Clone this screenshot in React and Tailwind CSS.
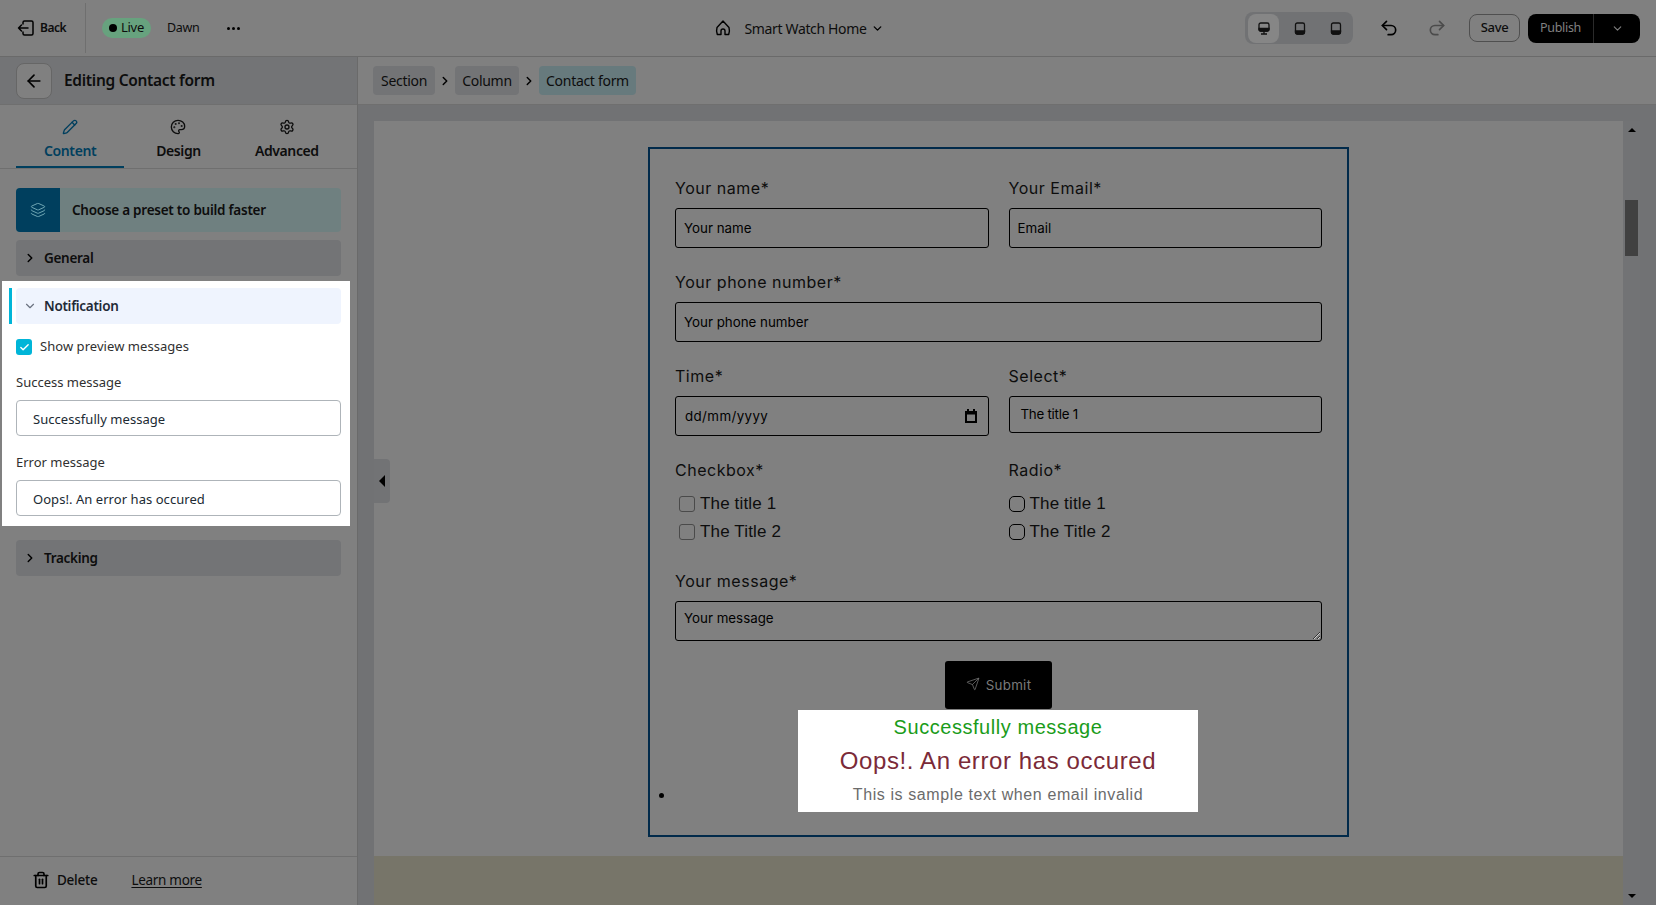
import {
  ArrowLeft,
  Check,
  ChevronDown,
  ChevronRight,
  Layers,
  Palette,
  Pencil,
  Redo2,
  Send,
  Settings,
  Trash2,
  Undo2,
} from "lucide-react";

const ui = "font-['Noto_Sans',sans-serif]";
const preview = "font-['Inter',sans-serif]";

const BackIcon = () => (
  <svg width="18" height="18" viewBox="0 0 18 18" fill="none" stroke="#000" strokeWidth="1.5" strokeLinecap="round" strokeLinejoin="round">
    <path d="M6 5V3.500A1.500 1.500 0 0 1 7.500 2h7A1.500 1.500 0 0 1 16 3.500v11a1.500 1.500 0 0 1-1.500 1.500h-7A1.500 1.500 0 0 1 6 14.500V13" />
    <path d="M11 9H1.500M4.500 6l-3 3 3 3" />
  </svg>
);

const HomeIcon = () => (
  <svg width="16" height="18" viewBox="0 0 16 18" fill="none" stroke="#000" strokeWidth="1.4" strokeLinejoin="round">
    <path d="M8 2 2 8.500c-.6 2-.5 4.500.3 7H6v-3.500a2 2 0 0 1 4 0v3.500h3.700c.8-2.500.9-5 .3-7z" />
  </svg>
);

const DeviceIcon = ({ kind }) => (
  <svg width="12" height="13" viewBox="0 0 12 13" fill="none" stroke="#111" strokeWidth="1.3">
    {kind === "desktop" ? (
      <>
        <rect x="1" y="1" width="10" height="8" rx="1.800" />
        <path d="M1 6.500h10V7.500a1.500 1.500 0 0 1-1.500 1.500h-7A1.500 1.500 0 0 1 1 7.500z" fill="#111" />
        <path d="M3 12h6M6 9v3" />
      </>
    ) : (
      <>
        <rect x="1.500" y="1" width="9" height="11" rx="1.800" />
        <path d="M1.500 9h9v1.200a1.800 1.800 0 0 1-1.800 1.800H3.300a1.800 1.800 0 0 1-1.800-1.800z" fill="#111" />
      </>
    )}
  </svg>
);

const SectionRow = ({ label }) => (
  <div className="flex h-9 items-center rounded bg-[#737476] pl-[7px]">
    <ChevronRight size={14} strokeWidth={2.5} className="text-black" />
    <span className="ml-[7px] text-[13.500px] font-semibold tracking-[-0.3px] text-[#0d0d0d]">{label}</span>
  </div>
);

const TabItem = ({ icon: Icon, label, active }) => (
  <div className={`flex h-[63px] flex-col items-center pt-[14px] ${active ? "border-b-2 border-[#003f5e] text-[#003f5e]" : "text-[#0d0d0d]"}`}>
    <Icon size={16} strokeWidth={2} />
    <span className="mt-[5px] text-[14px] font-semibold tracking-[-0.4px]">{label}</span>
  </div>
);

const NotifyField = ({ label, value }) => (
  <div>
    <div className="text-[13px] leading-[18px] text-[#303030]">{label}</div>
    <input
      readOnly
      value={value}
      className="mt-[9px] h-9 w-full rounded border border-[#aeb4b9] bg-white px-4 pt-[2px] text-[13px] tracking-[0.05px] text-[#202a33] outline-none"
    />
  </div>
);

const Sidebar = () => (
  <aside className="flex w-[358px] shrink-0 flex-col border-r border-[#6a6a6a] bg-[#808080]">
    <div className="flex h-[48px] items-center border-b border-[#6f6f6f] bg-[#737476] pl-4">
      <button className="flex h-9 w-9 items-center justify-center rounded-lg border border-[#666] bg-[#808080]">
        <ArrowLeft size={20} className="text-black" />
      </button>
      <h1 className="ml-3 pt-px text-[15.500px] font-semibold tracking-[-0.3px] text-[#0d0d0d]">Editing Contact form</h1>
    </div>
    <div className="grid h-[64px] grid-cols-3 border-b border-[#6f6f6f] px-4">
      <TabItem icon={Pencil} label="Content" active />
      <TabItem icon={Palette} label="Design" />
      <TabItem icon={Settings} label="Advanced" />
    </div>
    <div className="flex flex-1 flex-col px-4 pt-[19px]">
      <div className="flex h-11 items-center overflow-hidden rounded bg-[#6f8080]">
        <div className="flex h-full w-11 items-center justify-center bg-[#003f5e]">
          <Layers size={16} strokeWidth={1.5} className="text-[#6fa7b4]" />
        </div>
        <span className="ml-3 text-[13.500px] font-semibold tracking-[-0.25px] text-[#0d0d0d]">Choose a preset to build faster</span>
      </div>
      <div className="mt-2">
        <SectionRow label="General" />
      </div>
      {/* highlighted block, bleeds past the panel padding */}
      <div className="relative -ml-[14px] -mr-[9px] mt-[5px] h-[245px] bg-white pl-[14px] pr-[9px] pt-[7px]">
        <div className="absolute left-[7px] top-[7px] h-9 w-[3px] bg-[#00b5d8]" />
        <div className="flex h-9 items-center rounded bg-[#eff4fe] pl-[7px]">
          <ChevronDown size={14} className="text-[#6b7280]" />
          <span className="ml-[7px] text-[13.500px] font-semibold tracking-[-0.3px] text-[#1f2a37]">Notification</span>
        </div>
        <div className="mt-[15px] flex h-4 items-center">
          <span className="flex h-4 w-4 items-center justify-center rounded-[3px] bg-[#00b5d8]">
            <Check size={11} strokeWidth={3} className="text-white" />
          </span>
          <span className="ml-2 text-[13px] tracking-[0.05px] text-[#303030]">Show preview messages</span>
        </div>
        <div className="mt-[18px]">
          <NotifyField label="Success message" value="Successfully message" />
        </div>
        <div className="mt-[17px]">
          <NotifyField label="Error message" value="Oops!. An error has occured" />
        </div>
      </div>
      <div className="mt-[14px]">
        <SectionRow label="Tracking" />
      </div>
    </div>
    <div className="flex h-[49px] items-center border-t border-[#6f6f6f] pb-[2px] pl-8">
      <Trash2 size={18} strokeWidth={2.25} className="text-black" />
      <span className="ml-[7px] text-[13.500px] font-medium tracking-[-0.25px] text-[#0d0d0d]">Delete</span>
      <a className="ml-[34px] text-[13.500px] tracking-[-0.3px] text-[#0d0d0d] underline underline-offset-2">Learn more</a>
    </div>
  </aside>
);

const FieldLabel = ({ children }) => (
  <div className="text-[16px] leading-[20px] tracking-[0.52px] text-[#0d0d0d]">{children}</div>
);

const fieldBox = "mt-[10px] h-10 w-full rounded-[3px] border border-black bg-transparent px-2 text-[13.330px] text-black outline-none placeholder:text-black";

const TextField = ({ label, placeholder }) => (
  <div>
    <FieldLabel>{label}</FieldLabel>
    <input readOnly placeholder={placeholder} className={fieldBox} />
  </div>
);

const Choice = ({ label, round }) => (
  <label className="flex h-7 items-center font-['Liberation_Sans',sans-serif] text-[17px] tracking-[0.15px] text-[#0d0d0d]">
    {round ? (
      <span className="h-4 w-4 rounded-[5px] border border-black" />
    ) : (
      <span className="ml-1 h-4 w-4 rounded-[3px] border border-[#4a4a4a]" />
    )}
    <span className="ml-[5px]">{label}</span>
  </label>
);

const ContactForm = () => (
  <form className={`relative mx-auto h-[690px] w-[701px] border-2 border-[#012a4a] px-[25px] pt-[29px] ${preview}`}>
    <div className="grid grid-cols-2 gap-x-5">
      <TextField label="Your name*" placeholder="Your name" />
      <TextField label="Your Email*" placeholder="Email" />
    </div>
    <div className="mt-[24px]">
      <TextField label="Your phone number*" placeholder="Your phone number" />
    </div>
    <div className="mt-[24px] grid grid-cols-2 gap-x-5">
      <div>
        <FieldLabel>Time*</FieldLabel>
        <div className="mt-[10px] flex h-10 items-center justify-between rounded-[3px] border border-black pl-[9px] pr-[11px] text-[13.330px] tracking-[0.4px] text-black">
          <span className="pt-px">dd/mm/yyyy</span>
          <svg width="12" height="14" viewBox="0 0 12 14" fill="none" stroke="#000" strokeWidth="2">
            <path d="M1 3h10v10H1zM1 4.500h10M3 0v3M9 0v3" />
          </svg>
        </div>
      </div>
      <div>
        <FieldLabel>Select*</FieldLabel>
        <div className="mt-[10px] flex h-[37px] items-center rounded-[3px] border border-black pl-[11px] text-[13.330px] tracking-[-0.25px] text-black">The title 1</div>
      </div>
    </div>
    <div className="mt-[24px] grid grid-cols-2 gap-x-5">
      <div>
        <FieldLabel>Checkbox*</FieldLabel>
        <div className="mt-[10px]">
          <Choice label="The title 1" />
          <Choice label="The Title 2" />
        </div>
      </div>
      <div>
        <FieldLabel>Radio*</FieldLabel>
        <div className="mt-[10px]">
          <Choice label="The title 1" round />
          <Choice label="The Title 2" round />
        </div>
      </div>
    </div>
    <div className="mt-[25px]">
      <FieldLabel>Your message*</FieldLabel>
      <textarea
        readOnly
        placeholder="Your message"
        className="mt-[10px] block h-10 w-full rounded-[3px] border border-black bg-transparent px-2 py-[7px] text-[13.330px] text-black outline-none placeholder:text-black"
      />
    </div>
    <div className="mt-5 flex justify-center">
      <button type="button" className="flex h-12 w-[107px] items-center justify-center rounded-[3px] bg-black pt-[2px] text-[13.330px] tracking-[0.3px] text-[#7a7a7a]">
        <Send size={14} strokeWidth={1.25} className="-mt-1 mr-[6px]" />
        Submit
      </button>
    </div>
    <div className="relative mt-px flex h-[102px]">
      <span className="absolute -left-[16px] top-[83px] h-[5px] w-[5px] rounded-full bg-black" />
      <div className="ml-[123px] flex w-[400px] flex-col items-center bg-white font-['Liberation_Sans',sans-serif]">
        <div className="mt-[5px] text-[20px] leading-[24px] tracking-[0.55px] text-[#1a9c1a]">Successfully message</div>
        <div className="mt-[6px] text-[24px] leading-[32px] tracking-[0.6px] text-[#7b2a38]">Oops!. An error has occured</div>
        <div className="mt-[8px] text-[16px] leading-[20px] tracking-[0.6px] text-[#6b6b6b]">This is sample text when email invalid</div>
      </div>
    </div>
  </form>
);

const TopBar = () => (
  <header className={`flex h-[57px] shrink-0 items-center border-b border-[#6a6a6a] bg-[#808080] ${ui}`}>
    <div className="flex w-[85px] items-center justify-start pl-[17px]">
      <BackIcon />
      <span className="ml-[5px] text-[12px] font-semibold tracking-[-0.5px] text-[#0d0d0d]">Back</span>
    </div>
    <div className="h-[50px] w-px bg-[#6f6f6f]" />
    <div className="ml-4 flex h-5 w-[49px] items-center justify-center rounded-full bg-[#67a27e] text-[13px] tracking-[-0.3px] text-[#0d0d0d]">
      <span className="mr-1 h-2 w-2 rounded-full bg-black" />
      Live
    </div>
    <span className="ml-4 text-[12.500px] tracking-[-0.3px] text-[#0d0d0d]">Dawn</span>
    <span className="ml-[27px] flex gap-[2px]">
      <i className="h-[3px] w-[3px] rounded-full bg-black" />
      <i className="h-[3px] w-[3px] rounded-full bg-black" />
      <i className="h-[3px] w-[3px] rounded-full bg-black" />
    </span>
    <div className="ml-[475px] flex items-center">
      <HomeIcon />
      <span className="ml-[14px] text-[14px] tracking-[-0.35px] text-[#0d0d0d]">Smart Watch Home</span>
      <ChevronDown size={13} strokeWidth={2.5} className="ml-1 text-black" />
    </div>
    <div className="ml-auto flex items-center pr-4">
      <div className="flex h-8 w-[108px] items-center rounded-lg bg-[#717274] pl-[3px]">
        <span className="flex h-[29px] w-[31px] items-center justify-center rounded-lg bg-[#868686]">
          <DeviceIcon kind="desktop" />
        </span>
        <span className="flex w-[36px] justify-center pl-[5px]"><DeviceIcon /></span>
        <span className="flex w-[36px] justify-center pl-[5px]"><DeviceIcon /></span>
      </div>
      <Undo2 size={20} strokeWidth={2} className="ml-[26px] text-black" />
      <Redo2 size={20} strokeWidth={2} className="ml-[28px] text-[#4b4b4b]" />
      <button className="ml-[22px] h-7 w-[51px] rounded-lg border border-[#4f4f4f] text-[13px] font-medium tracking-[-0.3px] text-[#0d0d0d]">Save</button>
      <div className="ml-2 flex h-[29px] w-[112px] items-center rounded-lg bg-black text-[#808080]">
        <span className="w-[65px] text-center text-[12.500px] tracking-[-0.3px]">Publish</span>
        <span className="h-full w-px bg-[#2a2a2a]" />
        <ChevronDown size={13} className="ml-[17px]" />
      </div>
    </div>
  </header>
);

const Breadcrumbs = () => (
  <div className="flex h-[48px] shrink-0 items-center border-b border-[#6f6f6f] bg-[#808080] pl-[15px] text-[14px] tracking-[-0.3px] text-[#0d0d0d]">
    <span className="flex h-[29px] w-[62px] items-center justify-center rounded bg-[#737476]">Section</span>
    <ChevronRight size={14} strokeWidth={2.5} className="mx-[3px] text-black" />
    <span className="flex h-[29px] w-[64px] items-center justify-center rounded bg-[#737476]">Column</span>
    <ChevronRight size={14} strokeWidth={2.5} className="mx-[3px] text-black" />
    <span className="flex h-[29px] w-[97px] items-center justify-center rounded bg-[#677a7d]">Contact form</span>
  </div>
);

const Canvas = () => (
  <main className="flex min-w-0 flex-1 flex-col bg-[#717274]">
    <Breadcrumbs />
    <div className="relative flex min-h-0 flex-1 pl-4 pr-[16px] pt-4">
      <div className="flex h-full w-[1249px] flex-col bg-[#808080] pt-[26px]">
        <ContactForm />
        <div className="mt-[19px] flex-1 bg-[#777569]" />
      </div>
      {/* collapse handle */}
      <div className="absolute left-4 top-[354px] flex h-11 w-4 items-center justify-center rounded-r bg-[#727375]">
        <span className="h-0 w-0 border-y-[6px] border-r-[6px] border-y-transparent border-r-black" />
      </div>
      {/* scrollbar */}
      <div className="relative w-[17px] bg-[#727375]">
        <span className="absolute left-1/2 top-[7px] h-0 w-0 -translate-x-1/2 border-x-[4px] border-b-[4px] border-x-transparent border-b-black" />
        <span className="absolute left-[2px] top-[79px] h-[56px] w-[13px] bg-[#414141]" />
        <span className="absolute bottom-[7px] left-1/2 h-0 w-0 -translate-x-1/2 border-x-[4px] border-t-[4px] border-x-transparent border-t-black" />
      </div>
    </div>
  </main>
);

export default function App() {
  return (
    <div className={`flex h-[905px] w-[1656px] flex-col overflow-hidden bg-[#808080] ${ui}`}>
      <TopBar />
      <div className="flex min-h-0 flex-1">
        <Sidebar />
        <Canvas />
      </div>
    </div>
  );
}
